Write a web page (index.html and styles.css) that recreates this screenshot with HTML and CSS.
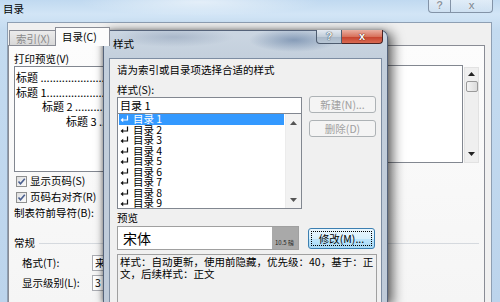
FILE: index.html
```html
<!DOCTYPE html>
<html lang="zh-CN">
<head>
<meta charset="utf-8">
<title>目录</title>
<link rel="stylesheet" href="styles.css">
</head>
<body>
<div class="win">
  <div class="titlebar">
    <span class="title">目录</span>
    <div class="obtns"><span class="ob oh">?</span><span class="ob ox">x</span></div>
  </div>
  <div class="client">
    <div class="tabs">
      <div class="tab">索引(X)</div>
      <div class="tab active">目录(C)</div>
      <div class="tab">图表目录(F)</div>
      <div class="tab">引文目录(A)</div>
    </div>
    <div class="panel">
      <div class="cols">
        <div class="col">
          <div class="plabel">打印预览(V)</div>
          <div class="pview">
            <div class="pl">标题 ...............................................</div>
            <div class="pl">标题 1.............................................</div>
            <div class="pl in1">标题 2 ........................................</div>
            <div class="pl in2">标题 3 ...................................</div>
          </div>
          <div class="chk"><span class="cbox"><svg width="9" height="9" viewBox="0 0 9 9"><path d="M1.5 4.5 L3.5 6.8 L7.8 1.8" fill="none" stroke="#4a5f8f" stroke-width="1.6"/></svg></span>显示页码(S)</div>
          <div class="chk"><span class="cbox"><svg width="9" height="9" viewBox="0 0 9 9"><path d="M1.5 4.5 L3.5 6.8 L7.8 1.8" fill="none" stroke="#4a5f8f" stroke-width="1.6"/></svg></span>页码右对齐(R)</div>
          <div class="leader">制表符前导符(B):</div>
        </div>
        <div class="col">
          <div class="plabel">Web 预览(W)</div>
          <div class="wview">
            <div class="wpage"></div>
            <div class="wsb">
              <svg class="arr" width="7" height="4" viewBox="0 0 7 4"><path d="M0 4 L3.5 0 L7 4 Z" fill="#222"/></svg>
              <div class="thumb"></div>
              <div class="wspace"></div>
              <svg class="arr" width="7" height="4" viewBox="0 0 7 4"><path d="M0 0 L3.5 4 L7 0 Z" fill="#222"/></svg>
            </div>
          </div>
        </div>
      </div>
      <div class="general">
        <div class="ghead">常规</div>
        <div class="frow"><span class="flabel">格式(T):</span><span class="field">来自模板</span></div>
        <div class="frow"><span class="flabel">显示级别(L):</span><span class="field small">3</span></div>
      </div>
    </div>
  </div>
</div>

<div class="dlg">
  <div class="dtitle">样式</div>
  <div class="cap"><span class="cb-h">?</span><span class="cb-x">x</span></div>
  <div class="dclient">
    <div class="caption">请为索引或目录项选择合适的样式</div>
    <div class="lbl">样式(S):</div>
    <div class="srow">
      <div class="scol">
        <div class="edit">目录 1</div>
        <div class="list">
          <div class="items">
            <div class="it sel"><svg width="9" height="8" viewBox="0 0 9 8"><path d="M7.5 0.5 V5 H2.5" fill="none" stroke="currentColor" stroke-width="1.2"/><path d="M0.5 5 L3.2 2.8 V7.2 Z" fill="currentColor"/></svg>目录 1</div>
            <div class="it"><svg width="9" height="8" viewBox="0 0 9 8"><path d="M7.5 0.5 V5 H2.5" fill="none" stroke="currentColor" stroke-width="1.2"/><path d="M0.5 5 L3.2 2.8 V7.2 Z" fill="currentColor"/></svg>目录 2</div>
            <div class="it"><svg width="9" height="8" viewBox="0 0 9 8"><path d="M7.5 0.5 V5 H2.5" fill="none" stroke="currentColor" stroke-width="1.2"/><path d="M0.5 5 L3.2 2.8 V7.2 Z" fill="currentColor"/></svg>目录 3</div>
            <div class="it"><svg width="9" height="8" viewBox="0 0 9 8"><path d="M7.5 0.5 V5 H2.5" fill="none" stroke="currentColor" stroke-width="1.2"/><path d="M0.5 5 L3.2 2.8 V7.2 Z" fill="currentColor"/></svg>目录 4</div>
            <div class="it"><svg width="9" height="8" viewBox="0 0 9 8"><path d="M7.5 0.5 V5 H2.5" fill="none" stroke="currentColor" stroke-width="1.2"/><path d="M0.5 5 L3.2 2.8 V7.2 Z" fill="currentColor"/></svg>目录 5</div>
            <div class="it"><svg width="9" height="8" viewBox="0 0 9 8"><path d="M7.5 0.5 V5 H2.5" fill="none" stroke="currentColor" stroke-width="1.2"/><path d="M0.5 5 L3.2 2.8 V7.2 Z" fill="currentColor"/></svg>目录 6</div>
            <div class="it"><svg width="9" height="8" viewBox="0 0 9 8"><path d="M7.5 0.5 V5 H2.5" fill="none" stroke="currentColor" stroke-width="1.2"/><path d="M0.5 5 L3.2 2.8 V7.2 Z" fill="currentColor"/></svg>目录 7</div>
            <div class="it"><svg width="9" height="8" viewBox="0 0 9 8"><path d="M7.5 0.5 V5 H2.5" fill="none" stroke="currentColor" stroke-width="1.2"/><path d="M0.5 5 L3.2 2.8 V7.2 Z" fill="currentColor"/></svg>目录 8</div>
            <div class="it"><svg width="9" height="8" viewBox="0 0 9 8"><path d="M7.5 0.5 V5 H2.5" fill="none" stroke="currentColor" stroke-width="1.2"/><path d="M0.5 5 L3.2 2.8 V7.2 Z" fill="currentColor"/></svg>目录 9</div>
          </div>
          <div class="lsb">
            <svg width="7" height="4" viewBox="0 0 7 4"><path d="M0 4 L3.5 0 L7 4 Z" fill="#555"/></svg>
            <svg width="7" height="4" viewBox="0 0 7 4"><path d="M0 0 L3.5 4 L7 0 Z" fill="#555"/></svg>
          </div>
        </div>
      </div>
      <div class="bcol">
        <div class="btn dis">新建(N)...</div>
        <div class="btn dis">删除(D)</div>
      </div>
    </div>
    <div class="lbl2">预览</div>
    <div class="prow">
      <div class="pbox"><span class="font">宋体</span><span class="size">10.5 磅</span></div>
      <div class="btn mod"><span class="focus">修改(M)...</span></div>
    </div>
    <div class="desc"><div>样式：自动更新，使用前隐藏，优先级：40，基于：正</div><div>文，后续样式：正文</div></div>
  </div>
</div>
</body>
</html>
```

FILE: styles.css
```css
* { box-sizing: border-box; }
html, body { margin: 0; padding: 0; }
body {
  width: 500px;
  height: 302px;
  overflow: hidden;
  position: relative;
  font-family: "Noto Sans CJK SC", "Noto Sans", sans-serif;
  font-size: 10.5px;
  line-height: 12px;
  color: #000;
  background: #c6dcf0;
}

/* ---------- outer window ---------- */
.win {
  height: 302px;
  display: flex;
  flex-direction: column;
  overflow: hidden;
  background:
    radial-gradient(ellipse 120px 14px at 200px 2px, rgba(255,255,255,0.55), transparent),
    linear-gradient(to bottom, #c0d9f0 0, #d2e5f6 14px, #c4dbf0 30px, #bcd4ec 100%);
}
.titlebar {
  height: 22px;
  flex: none;
  display: flex;
  align-items: flex-start;
  padding: 3px 7px 0 3px;
}
.title { line-height: 12px; }
.obtns {
  margin-left: auto;
  margin-top: -4px;
  display: flex;
}
.ob {
  height: 14px;
  border: 1px solid #8393a7;
  border-top: none;
  background: linear-gradient(to bottom, rgba(255,255,255,0.55), rgba(205,222,238,0.5));
  font-family: "Liberation Sans", sans-serif;
  font-weight: bold;
  font-size: 11px;
  line-height: 13px;
  text-align: center;
  color: #8c97a3;
  text-shadow: 0 0 1px #fff, 0 0 1px #fff;
}
.oh { width: 23px; border-radius: 0 0 0 4px; }
.ox { width: 42px; border-left: none; border-radius: 0 0 4px 0; }

.client {
  flex: 1;
  min-height: 0;
  margin: 0 8px 0 7px;
  background: #f0f0f0;
  border: 1px solid #8e9fb3;
  border-bottom: none;
  padding-right: 6px;
  display: flex;
  flex-direction: column;
}
.tabs {
  height: 22px;
  flex: none;
  display: flex;
  align-items: flex-end;
  padding-left: 1px;
}
.tab {
  height: 15px;
  padding: 2px 6px 0;
  border: 1px solid #898c95;
  border-bottom: none;
  border-left: none;
  background: linear-gradient(to bottom, #ececec, #d8d8d8);
  color: #8a8a8a;
  white-space: nowrap;
  line-height: 12px;
}
.tab:first-child { border-left: 1px solid #898c95; width: 48px; }
.tab.active {
  position: relative;
  z-index: 1;
  height: 19px;
  margin: 0 0 -1px -2px;
  padding-top: 3px;
  width: 55px;
  border-left: 1px solid #898c95;
  background: #fcfcfc;
  color: #000;
}
.panel {
  flex: 1;
  min-height: 0;
  border: 1px solid #898c95;
  border-bottom: none;
  background: linear-gradient(to bottom, #fcfcfc, #f5f5f5);
  padding: 0 5px;
}
.cols {
  display: grid;
  grid-template-columns: 226px 1fr;
  column-gap: 10px;
}
.plabel { padding-top: 7px; height: 19px; }
.pview {
  height: 106px;
  margin-top: 1px;
  border: 1px solid #828790;
  background: #fff;
  padding: 3px 0 0 1px;
  overflow: hidden;
  font-size: 11px;
}
.pl { white-space: nowrap; line-height: 14.7px; }
.in1 { padding-left: 26px; }
.in2 { padding-left: 50px; }
.chk {
  height: 16px;
  margin-top: 1px;
  padding-left: 2px;
  display: flex;
  align-items: center;
  gap: 3px;
}
.chk + .chk { margin-top: 0; }
.cbox {
  width: 11px;
  height: 11px;
  border: 1px solid #8e8f8f;
  background: linear-gradient(135deg, #dedede, #fbfbfb);
  display: flex;
  align-items: center;
  justify-content: center;
}
.leader { height: 16px; line-height: 16px; }
.wview {
  height: 98px;
  display: flex;
  gap: 1px;
}
.wpage { flex: 1; border: 1px solid #828790; background: #fff; }
.wsb {
  width: 15px;
  margin-top: 2px;
  background: #efefef;
  border: 1px solid #e2e2e2;
  display: flex;
  flex-direction: column;
  align-items: center;
  padding: 4px 0 6px;
}
.thumb {
  width: 12px;
  height: 11px;
  margin-top: 5px;
  border: 1px solid #9a9a9a;
  border-radius: 2px;
  background: linear-gradient(to right, #f4f4f4, #dcdcdc);
}
.wspace { flex: 1; }
.general { margin-top: 14px; }
.ghead {
  height: 16px;
  line-height: 16px;
  display: flex;
  align-items: center;
  gap: 4px;
}
.ghead::after {
  content: "";
  flex: 1;
  border-top: 1px solid #d5d9de;
  margin-top: 1px;
}
.frow {
  height: 16px;
  margin-top: 4px;
  padding-left: 8px;
  display: flex;
  align-items: center;
}
.flabel { width: 70px; }
.field {
  height: 16px;
  width: 120px;
  border: 1px solid #abadb3;
  background: #fff;
  padding-left: 2px;
  line-height: 14px;
}
.field.small { width: 40px; }

/* ---------- style dialog ---------- */
.dlg {
  position: absolute;
  left: 103px;
  top: 30px;
  width: 285px;
  height: 272px;
  border: 1px solid #55637a;
  border-bottom: none;
  border-radius: 7px 7px 0 0;
  padding: 0 5px;
  display: flex;
  flex-direction: column;
  background:
    radial-gradient(ellipse 45px 12px at 190px 9px, rgba(80,110,150,0.55), transparent),
    radial-gradient(ellipse 60px 10px at 70px 6px, rgba(110,130,160,0.35), transparent),
    linear-gradient(to bottom, #cbd6e2 0, #c3cfdc 28px, #bfcbd9 100%);
  box-shadow: 4px 3px 12px 1px rgba(0,0,0,0.6), -1px 0 4px rgba(0,0,0,0.3);
}
.dtitle {
  height: 27px;
  flex: none;
  display: flex;
  align-items: center;
  padding: 0 0 2px 4px;
}
.cap {
  position: absolute;
  top: -1px;
  right: 4px;
  display: flex;
  font-family: "Liberation Sans", sans-serif;
  font-weight: bold;
  font-size: 11px;
  line-height: 13px;
  text-align: center;
}
.cb-h {
  width: 26px;
  height: 14px;
  border: 1px solid #4e5c6f;
  border-top: none;
  border-radius: 0 0 0 4px;
  background: linear-gradient(to bottom, #e4eaf1, #c2ceda 50%, #a9b8c8 51%, #b8c6d5);
  color: #eef2f6;
  text-shadow: 0 0 1px #33414f, 0 0 1px #33414f;
}
.cb-x {
  width: 41px;
  height: 14px;
  border: 1px solid #4b2323;
  border-top: none;
  border-left: none;
  border-radius: 0 0 4px 0;
  background: linear-gradient(to bottom, #eab0a2, #d8735d 50%, #c5412c 51%, #d96a52);
  color: #fff;
  text-shadow: 0 0 1px #4a1510, 0 0 1px #4a1510;
}
.dclient {
  flex: 1;
  min-height: 0;
  overflow: hidden;
  background: #f0f0f0;
  border: 1px solid #7d8da2;
  border-bottom: none;
  padding: 5px 0 0 7px;
}
.caption { height: 12px; }
.lbl { margin-top: 8px; height: 12px; }
.srow { display: flex; gap: 7px; margin-top: 1px; }
.scol { width: 185px; }
.edit {
  height: 17px;
  border: 1px solid #828790;
  background: #fff;
  padding-left: 2px;
  line-height: 15px;
  font-size: 11px;
}
.list {
  height: 96px;
  margin-top: -1px;
  border: 1px solid #828790;
  background: #fff;
  display: flex;
}
.items { flex: 1; padding: 0 1px; }
.it {
  height: 10.5px;
  line-height: 10.5px;
  font-size: 10.5px;
  padding-left: 1px;
  display: flex;
  align-items: center;
  gap: 4px;
  white-space: nowrap;
  color: #000;
}
.it svg { flex: none; color: #111; }
.it.sel { background: #3399ff; color: #fff; }
.it.sel svg { color: #fff; }
.lsb {
  width: 16px;
  background: #f2f2f2;
  border-left: 1px solid #ececec;
  display: flex;
  flex-direction: column;
  justify-content: space-between;
  align-items: center;
  padding: 7px 0 6px;
}
.bcol { width: 67px; margin-top: -1px; display: flex; flex-direction: column; gap: 7px; }
.btn {
  height: 17px;
  border: 1px solid #707070;
  border-radius: 3px;
  background: linear-gradient(to bottom, #f2f2f2, #ebebeb 50%, #dddddd 51%, #cfcfcf);
  text-align: center;
  line-height: 15px;
  white-space: nowrap;
}
.btn.dis {
  border-color: #adb2b5;
  background: #f4f4f4;
  color: #a0a0a0;
}
.lbl2 { margin-top: 3px; height: 12px; }
.prow { display: flex; margin-top: 2px; }
.pbox {
  width: 182px;
  height: 24px;
  border: 1px solid #a0a0a0;
  background: linear-gradient(to right, #fff 0, #fff 154px, #a9a9a9 154px);
  display: flex;
  align-items: center;
  padding-left: 5px;
}
.font { font-size: 14px; line-height: 16px; width: 149px; }
.size {
  font-size: 6px;
  line-height: 6px;
  align-self: flex-end;
  margin-bottom: 3px;
  margin-left: 3px;
  white-space: nowrap;
  color: #222;
}
.btn.mod {
  width: 67px;
  height: 21px;
  margin: 2px 0 0 9px;
  border-color: #3c7fb1;
  background: linear-gradient(to bottom, #eaf6fd, #d9f0fc 50%, #bee6fd 51%, #a7d9f5);
  padding: 2px;
  line-height: 13px;
}
.focus {
  display: block;
  height: 15px;
  border: 1px dotted #000;
}
.desc {
  width: 260px;
  height: 60px;
  margin-top: 4px;
  border: 1px solid #a0a0a0;
  border-bottom: none;
  background: #f0f0f0;
  padding: 1px 0 0 2px;
  white-space: nowrap;
}
```
